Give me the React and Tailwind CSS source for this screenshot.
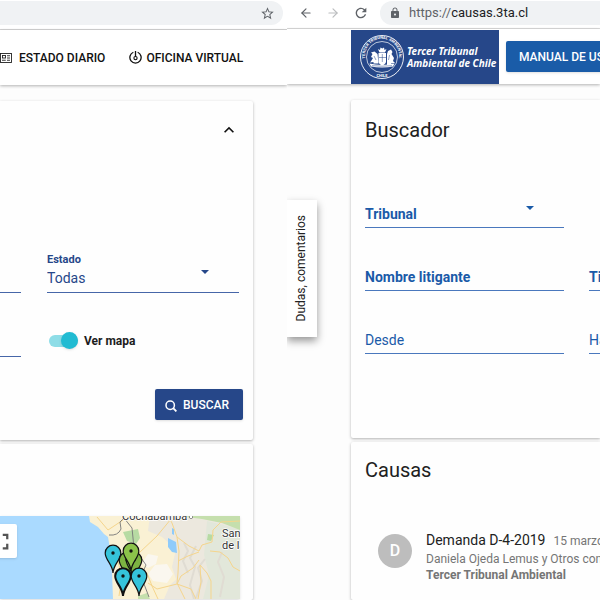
import { ArrowLeft, ArrowRight } from 'lucide-react'
import { MdFullscreen, MdKeyboardArrowUp, MdLock, MdRefresh, MdStarBorder } from 'react-icons/md'

const PINS = [
  { x: 113, y: 37, color: '#35c3da' },
  { x: 127, y: 44, color: '#7cb342' },
  { x: 134, y: 44, color: '#7cb342' },
  { x: 131, y: 35, color: '#8bc34a' },
  { x: 123, y: 60, color: '#35c3da', width: 2 },
  { x: 139, y: 60, color: '#35c3da' },
]

function NewsIcon() {
  return (
    <svg viewBox="0 0 24 20" className="h-[10px] w-3 shrink-0" fill="none" stroke="#222" strokeWidth="1.800" aria-hidden="true">
      <rect x="1" y="1" width="22" height="18" />
      <rect x="5" y="5" width="6" height="5" />
      <path d="M14 5.500h6M14 10h6M4 14.500h7.500M14 14.500h6" />
    </svg>
  )
}

function OfficeIcon() {
  return (
    <svg viewBox="0 0 24 24" className="size-[13px] shrink-0" fill="none" stroke="#111" strokeWidth="2.400" aria-hidden="true">
      <path d="M8 2.300a10.400 10.400 0 1 0 8 0" />
      <circle cx="12" cy="13" r="3" strokeWidth="2" />
      <path d="M12 0v10" strokeWidth="2.400" />
    </svg>
  )
}

function SearchIcon() {
  return (
    <svg viewBox="0 0 12 12" className="mt-0.5 size-3 shrink-0" fill="none" stroke="currentColor" strokeWidth="1.500" aria-hidden="true">
      <circle cx="5.200" cy="5.200" r="4.200" />
      <path d="M8.200 8.200l3.200 3.200" strokeWidth="1.800" />
    </svg>
  )
}

function Seal() {
  return (
    <svg viewBox="0 0 46 46" className="size-[46px] shrink-0" fill="none" stroke="#fff" aria-hidden="true">
      <circle cx="23" cy="23" r="21.500" strokeWidth="0.900" />
      <circle cx="23" cy="23" r="15.500" strokeWidth="0.700" />
      <path id="seal-arc" d="M6.400 25.500a17 17 0 1 1 33.200 0" stroke="none" />
      <text fill="#fff" stroke="none" className="font-['Roboto',sans-serif] text-[4px] font-bold">
        <textPath href="#seal-arc" startOffset="50%" textAnchor="middle">TERCER TRIBUNAL AMBIENTAL</textPath>
      </text>
      <text x="23" y="43" textAnchor="middle" fill="#fff" stroke="none" className="font-['Roboto',sans-serif] text-[4px] font-bold">CHILE</text>
      <g fill="#fff" stroke="none">
        <path d="M19.500 19h7.500v8.500q0 2.500-3.750 4-3.750-1.500-3.750-4z" />
        <path d="M20.500 18.500 19 15l2 1 .5-2.500 1.800 1 1.700-1 .5 2.500 2-1-1.500 3.500z" />
        <path d="M18.500 20l-3-2.500-3.500 1 1.500 1.500-1.500 3 2 1-1.500 2.500-1.500 2 3.500-.5v1.500h5z" />
        <path d="M28 20l1-3 3-1.500 1.500 2.500-1 2 2.500 4-1 3 2 2-4 .5.500 1.500h-4.500z" />
        <path d="M10.500 29.500q5.500 1 12.500 1.500 7-.5 12.500-1.500l-1.500 3q-5 1-11 1t-11-1z" />
      </g>
      <path d="M20 23.500h7M23.300 20v8M15 22l2 4M30.500 21l-1 5M13 31.700q10 1 20 0" stroke="#264789" strokeWidth="0.500" />
    </svg>
  )
}

function Caret() {
  return (
    <svg viewBox="0 0 8 4" className="pointer-events-none mr-[30px] h-1 w-2 self-center justify-self-end [grid-area:1/1]" aria-hidden="true">
      <path d="M0 0h8L4 4z" fill="currentColor" />
    </svg>
  )
}

// Label sits on the same grid cell as its control, like an empty Material field
function Field({ id, label, bold = false, select = false }) {
  return (
    <div className="grid h-10 border-b border-[#4a78bd] text-[#1a5aa8]">
      {select ? (
        <select id={id} className="w-full appearance-none bg-transparent text-sm outline-none [grid-area:1/1]">
          <option value="" />
        </select>
      ) : (
        <input id={id} className="w-full min-w-0 bg-transparent text-sm outline-none [grid-area:1/1]" />
      )}
      <label
        htmlFor={id}
        className={`pointer-events-none self-end pb-[3px] text-sm leading-5 whitespace-nowrap [grid-area:1/1] ${bold ? 'font-bold' : ''}`}
      >
        {label}
      </label>
      {select && <Caret />}
    </div>
  )
}

function CasesMap() {
  return (
    <div className="relative mr-[13px] overflow-hidden shadow-sm">
      <svg viewBox="0 0 240 83" preserveAspectRatio="xMinYMin slice" className="block h-[83px] w-full" role="img" aria-label="Mapa">
        <rect width="240" height="83" fill="#faf1d4" />
        <path d="M150 0h90v83h-70l8-14-6-18 4-18-14-12-14-6z" fill="#ece8de" />
        <path d="M180 60l14 4 4 19h-34l6-14z" fill="#ece8de" />
        <path d="M207 5l33 8v70h-37l6-24-5-20z" fill="#e2e7da" />
        <path d="M178 0h62v14l-18-7-20-4z" fill="#c5dfad" />
        <path d="M123 16l15-3 2 9-4 6-9-3zM208 18l6 1-3 6-4-1z" fill="#b7dba3" />
        <path d="M148 38l10 2-2 8-8 4-6-5zM155 49l12-1 6 10-6 9-14-2-5-7z" fill="#faf7ef" />
        <path d="M138 80l9-3 3 6h-12z" fill="#c5dfad" />
        <path d="M184 27l4 8-5 10 5 12M196 30l-6 12 5 9-5 18 4 14M222 36l-4 10 6 15-4 20M205 43l-7 9 4 13-6 17" stroke="#e0dcd3" strokeWidth="2" fill="none" />
        <path d="M0 0h89l1 6 8 5 6 7 4 3 2 12-1 10 3 13 1 27H0z" fill="#aadaff" />
        <path d="M168 22l8 4 1 11-5-1-4-5zM172 12l2 1v6l-2-1z" fill="#8fcbfa" />
        <g fill="none" stroke="#f5d58c" strokeWidth="1">
          <path d="M97 1l11 13 15-10M171 3l-14 17-18 17M168 0l4 7 5 14 2 14-1 22-1 10 8 16M177 21l12 9 10 5 3-6 10-3 1-12 8-8 19-1M178 45l10-5 11-4M210 35l10 1 8 6 5 9 7 4M199 44l-6 8-12 8-4 8M200 49l7 8 4 8v18M200 49l1 17-3 17M177 68l-20 5-9-6M177 68l14 5 5 10M115 34l3 12 4 14-3 20M147 57l5 13 6 13" />
        </g>
        <path d="M109 19q9 1 12-6l-1-7 4-4 8 10 2 20 3 4 9 13-5 11 3 8 5 13" fill="none" stroke="#777" strokeWidth="0.900" />
        <g className="font-['Roboto',sans-serif]" fill="#333" stroke="#fff" strokeWidth="1.500" paintOrder="stroke" fontSize="11">
          <text x="122" y="4">Cochabamba</text>
          <circle cx="191" cy="1" r="1.500" fill="#fff" stroke="#333" strokeWidth="1" />
          <text x="222" y="21">San</text>
          <text x="222" y="33">de la</text>
        </g>
        {PINS.map((pin) => (
          <g key={`${pin.x}-${pin.y}`} transform={`translate(${pin.x} ${pin.y})`}>
            <path
              d="M0 20C-.5 11-7.800 7-7.800 0a7.800 7.800 0 1 1 15.600 0C7.800 7 .5 11 0 20z"
              fill={pin.color}
              stroke="#111"
              strokeWidth={pin.width || 1.200}
            />
            <circle r="1.700" fill="#111" />
          </g>
        ))}
      </svg>
      <button
        type="button"
        aria-label="Pantalla completa"
        className="absolute top-2 -left-[17px] flex size-[34px] items-center justify-center rounded-xs bg-white text-[#555] shadow"
      >
        <MdFullscreen size={27} />
      </button>
    </div>
  )
}

function LeftPane() {
  return (
    <div className="flex min-w-0 flex-col overflow-hidden">
      <div className="h-[30px] shrink-0 border-b border-[#d5d5d5] bg-white pt-px pr-1">
        <div className="flex h-6 items-center justify-end rounded-r-full bg-[#f0f2f4] pr-2">
          <button type="button" aria-label="Agregar a marcadores" className="text-[#5f6368]">
            <MdStarBorder size={15} />
          </button>
        </div>
      </div>
      <nav className="relative flex h-[55px] shrink-0 items-center gap-6 bg-white text-xs font-medium whitespace-nowrap text-[#111] shadow-[0_1px_3px_rgba(0,0,0,0.3)]">
        <a href="#estado" className="flex items-center gap-[7px]">
          <NewsIcon />
          ESTADO DIARIO
        </a>
        <a href="#oficina" className="flex items-center gap-1">
          <OfficeIcon />
          OFICINA VIRTUAL
        </a>
      </nav>

      <div className="flex grow flex-col gap-1 pt-4 pr-[34px]">
        <section className="rounded-r-xs bg-[#fefefe] pt-[19px] pb-5 shadow-[0_1px_3px_rgba(0,0,0,0.3)]">
          <div className="flex justify-end pr-[14px]">
            <button type="button" aria-label="Contraer" className="text-[#111]">
              <MdKeyboardArrowUp size={20} />
            </button>
          </div>
          <form className="mt-28" onSubmit={(event) => event.preventDefault()}>
            <div className="grid grid-cols-[21px_1fr] gap-x-[26px] gap-y-[23px] pr-[14px]">
              <input aria-label="Materia" className="h-[41px] min-w-0 border-b border-[#4666a8] outline-none" />
              <div className="grid h-[41px] border-b border-[#4666a8] text-[#264789]">
                <div className="flex flex-col [grid-area:1/1]">
                  <label htmlFor="estado" className="text-[11px] leading-4 font-bold">Estado</label>
                  <select id="estado" className="h-5 w-full appearance-none bg-transparent text-sm leading-5 outline-none">
                    <option>Todas</option>
                  </select>
                </div>
                <Caret />
              </div>
              <input aria-label="Fecha" className="h-[41px] min-w-0 border-b border-[#4666a8] outline-none" />
              <div className="flex items-center gap-1.5 pt-2 pl-0.5">
                <input
                  id="mapa"
                  type="checkbox"
                  role="switch"
                  defaultChecked
                  className="flex h-3 w-[29px] appearance-none items-center rounded-full bg-gray-300 before:size-[17px] before:shrink-0 before:rounded-full before:bg-white before:shadow checked:justify-end checked:bg-[#8edde7] checked:before:bg-[#21bbd2]"
                />
                <label htmlFor="mapa" className="text-xs font-bold text-[#1c1c1c]">Ver mapa</label>
              </div>
            </div>
            <div className="mt-8 flex justify-end pr-[10px]">
              <button type="submit" className="flex h-[31px] items-center gap-1.5 rounded-xs bg-[#264789] pr-[14px] pl-[10px] text-xs font-medium text-white shadow">
                <SearchIcon />
                BUSCAR
              </button>
            </div>
          </form>
        </section>

        <section className="grow rounded-r-xs bg-[#fefefe] pt-[72px] shadow-[0_1px_3px_rgba(0,0,0,0.3)]">
          <CasesMap />
        </section>
      </div>
    </div>
  )
}

function RightPane() {
  return (
    <div className="flex min-w-0 flex-col overflow-hidden">
      <div className="flex h-[29px] shrink-0 items-start border-b border-[#dcdcdc] bg-white pt-px text-[#5f6368]">
        <div className="flex h-6 shrink-0 items-center gap-[13px] pr-[11px] pl-3">
          <button type="button" aria-label="Atrás"><ArrowLeft size={14} /></button>
          <button type="button" aria-label="Adelante" className="text-[#bbbdbf]"><ArrowRight size={14} /></button>
          <button type="button" aria-label="Recargar"><MdRefresh size={16} /></button>
        </div>
        <div className="flex h-6 grow items-center gap-2 rounded-l-full bg-[#f0f2f4] pl-[9px] text-[13px]">
          <MdLock size={12} />
          <span>https://<span className="text-[#202124]">causas.3ta.cl</span></span>
        </div>
      </div>
      <header className="relative flex h-[55px] shrink-0 items-center gap-[7px] bg-white pl-16 shadow-[0_1px_3px_rgba(0,0,0,0.3)]">
        <a href="#inicio" className="flex h-[54px] w-[148px] shrink-0 items-center gap-0.5 bg-[#264789] pl-2 whitespace-nowrap text-white">
          <Seal />
          <span className="font-['Noto_Sans',sans-serif] text-[10px] leading-3 font-bold italic">
            Tercer Tribunal
            <br />
            Ambiental de Chile
          </span>
        </a>
        <button type="button" className="h-[31px] shrink-0 rounded-xs bg-[#1a5ca8] px-[13px] text-xs font-medium whitespace-nowrap text-white shadow">
          MANUAL DE USUARIO
        </button>
      </header>

      <div className="flex grow">
        <aside className="w-16 shrink-0 pt-[116px]">
          <button
            type="button"
            className="flex h-[137px] w-[30px] items-center justify-center bg-white pr-0.5 text-xs whitespace-nowrap text-[#222] shadow-[0_4px_8px_rgba(0,0,0,0.4)]"
          >
            <span className="rotate-180 [writing-mode:vertical-rl]">Dudas, comentarios</span>
          </button>
        </aside>
        <main className="flex min-w-0 grow flex-col gap-1 pt-4">
          <section className="rounded-l-xs bg-[#fefefe] pt-4 pb-[84px] pl-[14px] shadow-[0_1px_3px_rgba(0,0,0,0.3)]">
            <h2 className="text-xl leading-7 text-[#212121]">Buscador</h2>
            <form className="mt-11 grid grid-cols-[199px_1fr] gap-x-[25px] gap-y-[23px]">
              <div className="col-span-2 grid grid-cols-[199px]">
                <Field id="tribunal" label="Tribunal" bold select />
              </div>
              <Field id="litigante" label="Nombre litigante" bold />
              <Field id="tipo" label="Tipo" bold />
              <Field id="desde" label="Desde" />
              <Field id="hasta" label="Hasta" />
            </form>
          </section>

          <section className="grow rounded-l-xs bg-[#fefefe] pt-[14px] pl-[14px] shadow-[0_1px_3px_rgba(0,0,0,0.3)]">
            <h2 className="text-xl leading-7 text-[#212121]">Causas</h2>
            <article className="mt-[34px] flex items-center gap-[14px] pl-[13px] whitespace-nowrap">
              <div className="flex size-[34px] shrink-0 items-center justify-center rounded-full bg-[#bdbdbd] text-base font-medium text-white">D</div>
              <div className="pt-3 text-xs leading-4 text-[#757575]">
                <div className="flex items-baseline gap-2 leading-5">
                  <h3 className="text-sm leading-5 text-[#212121]">Demanda D-4-2019</h3>
                  <time>15 marzo</time>
                </div>
                <p>Daniela Ojeda Lemus y Otros con</p>
                <p className="font-bold">Tercer Tribunal Ambiental</p>
              </div>
            </article>
          </section>
        </main>
      </div>
    </div>
  )
}

export default function App() {
  return (
    <div className="grid h-screen grid-cols-[287fr_313fr] overflow-hidden bg-[#fdfdfd] font-['Roboto',sans-serif]">
      <LeftPane />
      <RightPane />
    </div>
  )
}
